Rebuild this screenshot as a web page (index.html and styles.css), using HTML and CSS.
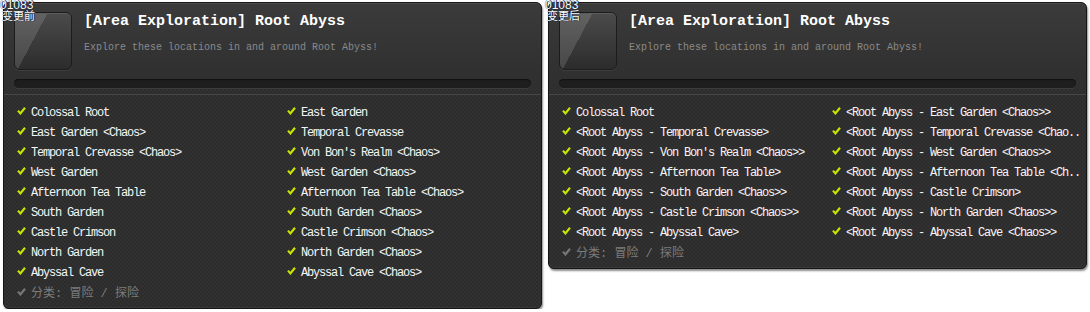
FILE: index.html
```html
<!DOCTYPE html>
<html lang="zh">

<head>
  <meta charset="UTF-8">
  <meta name="viewport" content="width=device-width, initial-scale=1.0">
  <title>Root Abyss</title>
  <link rel="stylesheet" href="styles.css">
</head>

<body>

  <div class="page">

    <!-- 变更前 -->
    <div class="panel">
      <div class="tag">01083<br><span>变更前</span></div>
      <div class="head">
        <div class="icon"></div>
        <div class="titles">
          <h1>[Area Exploration] Root Abyss</h1>
          <p>Explore these locations in and around Root Abyss!</p>
        </div>
      </div>
      <div class="bar"></div>
      <ul class="list">
        <li><i class="chk"></i>Colossal Root</li>
        <li><i class="chk"></i>East Garden</li>
        <li><i class="chk"></i>East Garden &lt;Chaos&gt;</li>
        <li><i class="chk"></i>Temporal Crevasse</li>
        <li><i class="chk"></i>Temporal Crevasse &lt;Chaos&gt;</li>
        <li><i class="chk"></i>Von Bon's Realm &lt;Chaos&gt;</li>
        <li><i class="chk"></i>West Garden</li>
        <li><i class="chk"></i>West Garden &lt;Chaos&gt;</li>
        <li><i class="chk"></i>Afternoon Tea Table</li>
        <li><i class="chk"></i>Afternoon Tea Table &lt;Chaos&gt;</li>
        <li><i class="chk"></i>South Garden</li>
        <li><i class="chk"></i>South Garden &lt;Chaos&gt;</li>
        <li><i class="chk"></i>Castle Crimson</li>
        <li><i class="chk"></i>Castle Crimson &lt;Chaos&gt;</li>
        <li><i class="chk"></i>North Garden</li>
        <li><i class="chk"></i>North Garden &lt;Chaos&gt;</li>
        <li><i class="chk"></i>Abyssal Cave</li>
        <li><i class="chk"></i>Abyssal Cave &lt;Chaos&gt;</li>
        <li class="cat"><i class="chk"></i>分类: 冒险 / 探险</li>
      </ul>
    </div>

    <!-- 变更后 -->
    <div class="panel">
      <div class="tag">01083<br><span>变更后</span></div>
      <div class="head">
        <div class="icon"></div>
        <div class="titles">
          <h1>[Area Exploration] Root Abyss</h1>
          <p>Explore these locations in and around Root Abyss!</p>
        </div>
      </div>
      <div class="bar"></div>
      <ul class="list">
        <li><i class="chk"></i>Colossal Root</li>
        <li><i class="chk"></i>&lt;Root Abyss - East Garden &lt;Chaos&gt;&gt;</li>
        <li><i class="chk"></i>&lt;Root Abyss - Temporal Crevasse&gt;</li>
        <li><i class="chk"></i>&lt;Root Abyss - Temporal Crevasse &lt;Chao..</li>
        <li><i class="chk"></i>&lt;Root Abyss - Von Bon's Realm &lt;Chaos&gt;&gt;</li>
        <li><i class="chk"></i>&lt;Root Abyss - West Garden &lt;Chaos&gt;&gt;</li>
        <li><i class="chk"></i>&lt;Root Abyss - Afternoon Tea Table&gt;</li>
        <li><i class="chk"></i>&lt;Root Abyss - Afternoon Tea Table &lt;Ch..</li>
        <li><i class="chk"></i>&lt;Root Abyss - South Garden &lt;Chaos&gt;&gt;</li>
        <li><i class="chk"></i>&lt;Root Abyss - Castle Crimson&gt;</li>
        <li><i class="chk"></i>&lt;Root Abyss - Castle Crimson &lt;Chaos&gt;&gt;</li>
        <li><i class="chk"></i>&lt;Root Abyss - North Garden &lt;Chaos&gt;&gt;</li>
        <li><i class="chk"></i>&lt;Root Abyss - Abyssal Cave&gt;</li>
        <li><i class="chk"></i>&lt;Root Abyss - Abyssal Cave &lt;Chaos&gt;&gt;</li>
        <li class="cat"><i class="chk"></i>分类: 冒险 / 探险</li>
      </ul>
    </div>

  </div>

</body>

</html>
```

FILE: styles.css
```css
* {
  margin: 0;
  padding: 0;
  box-sizing: border-box;
}

body {
  background: #fff;
  font-family: "Liberation Mono", "Noto Sans CJK SC", monospace;
}

.page {
  display: flex;
  align-items: flex-start;
  gap: 6px;
  padding: 2px 0 0 3px;
}

.panel {
  position: relative;
  width: 539px;
  border: 1px solid #161616;
  border-radius: 6px;
  box-shadow: 1px 2px 2px rgba(0, 0, 0, .45), inset 0 1px 0 #4a4a4a, inset 0 -1px 0 #3a3a3a;
  background-color: #2d2d2d;
  background-image:
    linear-gradient(#3b3b3b, #303030 70px, rgba(48, 48, 48, 0) 96px),
    repeating-conic-gradient(#2b2b2b 0 25%, #323232 0 50%);
  background-size: 100% 100%, 4px 4px;
  padding-bottom: 7px;
}

.tag {
  position: absolute;
  left: -4px;
  top: -3px;
  font: 12px/11px "Liberation Sans", "Noto Sans CJK SC", sans-serif;
  color: #fff;
  text-shadow: 0 0 1px #000, 1px 0 0 #1a3a8a;
}

.tag span {
  font-size: 11px;
  margin-left: 2px;
}

/* 头部 */
.head {
  display: flex;
  gap: 12px;
  padding: 9px 10px 0;
}

.icon {
  width: 58px;
  height: 58px;
  flex: none;
  border: 1px solid #1c1c1c;
  border-radius: 6px;
  background:
    linear-gradient(118deg, rgba(255, 255, 255, .13) 0 38%, rgba(255, 255, 255, 0) 38%),
    linear-gradient(#4b4b4b, #2c2c2c);
  box-shadow: inset 0 1px 0 #5c5c5c, 0 1px 0 #3e3e3e;
}

.titles h1 {
  font-size: 15px;
  font-weight: bold;
  line-height: 18px;
  color: #fff;
  margin-top: 1px;
}

.titles p {
  font-size: 10px;
  line-height: 12px;
  color: #8a8a8a;
  margin-top: 11px;
}

.bar {
  height: 9px;
  margin: 9px 10px 0;
  border-radius: 5px;
  background: #1e1e1e;
  box-shadow: inset 0 1px 1px #111, 0 1px 0 #3c3c3c;
}

/* 列表 */
.list {
  list-style: none;
  display: grid;
  grid-template-columns: 270px 1fr;
  margin-top: 6px;
  border-top: 1px solid #454545;
  padding: 8px 0 0 13px;
}

.list li {
  display: flex;
  align-items: center;
  gap: 5px;
  height: 20px;
  font-size: 12px;
  letter-spacing: -1.2px;
  color: #f6f6f6;
  white-space: nowrap;
  overflow: hidden;
}

.chk {
  width: 9px;
  height: 8px;
  flex: none;
  margin-top: -5px;
  background: url("data:image/svg+xml,%3Csvg xmlns='http://www.w3.org/2000/svg' viewBox='0 0 9 8'%3E%3Cpath d='M1 3.6 L3.4 6.4 L8 0.8' fill='none' stroke='%23c8e400' stroke-width='2.2'/%3E%3C/svg%3E") no-repeat;
}

.list li.cat {
  grid-column: 1 / -1;
  height: 18px;
  font-size: 12px;
  letter-spacing: 0;
  color: #7c7c7c;
}

.cat .chk {
  margin-top: -1px;
  background-image: url("data:image/svg+xml,%3Csvg xmlns='http://www.w3.org/2000/svg' viewBox='0 0 9 8'%3E%3Cpath d='M1 3.6 L3.4 6.4 L8 0.8' fill='none' stroke='%23777' stroke-width='2.2'/%3E%3C/svg%3E");
}
```
